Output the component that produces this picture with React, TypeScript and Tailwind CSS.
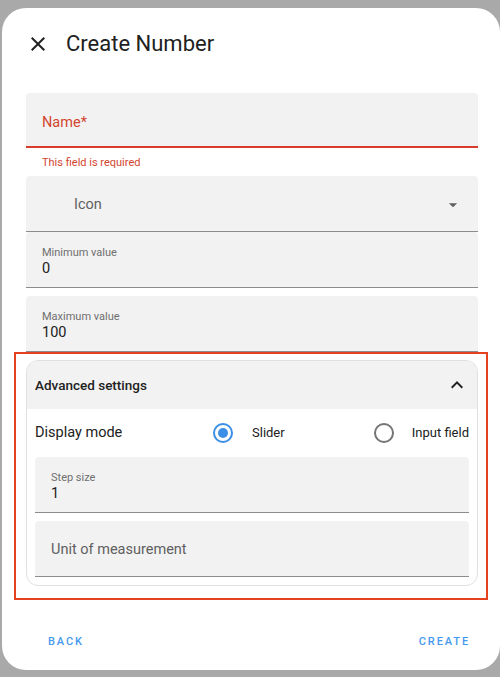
const font = { fontFamily: "Roboto, 'Liberation Sans', sans-serif" };

const CloseIcon = () => (
  <svg width="24" height="24" viewBox="0 0 24 24" fill="#212121">
    <path d="M19 6.41L17.59 5 12 10.59 6.41 5 5 6.41 10.59 12 5 17.59 6.41 19 12 13.41 17.59 19 19 17.59 13.41 12z" />
  </svg>
);

const ArrowDrop = () => (
  <svg width="22" height="22" viewBox="0 0 24 24" fill="#5f5f5f">
    <path d="M7.5 10l4.5 4.5 4.5-4.5z" />
  </svg>
);

const ExpandLess = () => (
  <svg width="24" height="24" viewBox="0 0 24 24" fill="#212121">
    <path d="M12 8l-6 6 1.41 1.41L12 10.83l4.59 4.58L18 14z" />
  </svg>
);

const ValueField = ({ label, value }: { label: string; value: string }) => (
  <div className="h-[56px] rounded-t-[4px] border-b border-[#8c8c8c] bg-[#f2f2f2] pl-4 pt-[13.5px]">
    <div className="text-[11px] leading-[13px] text-[#6f6f6f]">{label}</div>
    <div className="mt-[1px] text-[14.5px] leading-[18px] text-[#212121]">{value}</div>
  </div>
);

const Radio = ({ checked }: { checked?: boolean }) =>
  checked ? (
    <span className="flex h-[20px] w-[20px] items-center justify-center rounded-full border-2 border-[#3b8fe6]">
      <span className="h-[10px] w-[10px] rounded-full bg-[#3b8fe6]" />
    </span>
  ) : (
    <span className="h-[20px] w-[20px] rounded-full border-2 border-[#757575]" />
  );

export default function App() {
  return (
    <div className="h-[677px] w-[500px] overflow-hidden bg-[#a9a9a9] pt-2 pl-[2px]" style={font}>
      <div className="relative flex h-[662px] w-[498px] flex-col rounded-[24px] bg-white">
        <header className="flex h-[72px] items-center gap-4 pl-6">
          <CloseIcon />
          <h1 className="text-[22px] leading-[28px] text-[#212121]">Create Number</h1>
        </header>

        <div className="mt-[13px] flex flex-col pl-6 pr-[22px]">
          <div className="flex h-[55px] items-center rounded-t-[4px] border-b-2 border-[#d93b2b] bg-[#f2f2f2] pl-4 pt-[6px]">
            <span className="text-[14.5px] text-[#d3452f]">Name*</span>
          </div>
          <div className="h-[28px] pl-4 pt-[8px] text-[11px] leading-[13px] text-[#d3452f]">
            This field is required
          </div>

          <div className="flex h-[56px] items-center justify-between rounded-t-[4px] border-b border-[#8c8c8c] bg-[#f2f2f2] pl-12 pr-[14px] pt-[2px]">
            <span className="text-[14.5px] text-[#5f5f5f]">Icon</span>
            <ArrowDrop />
          </div>
          <ValueField label="Minimum value" value="0" />
          <div className="mt-2">
            <ValueField label="Maximum value" value="100" />
          </div>

          <section className="mt-2 h-[226px] overflow-hidden rounded-[12px] border border-[#e0e0e0]">
            <div className="flex h-[48px] items-center justify-between bg-[#f2f2f2] pl-2 pr-[8px]">
              <span className="text-[13.5px] font-medium text-[#212121]">Advanced settings</span>
              <ExpandLess />
            </div>
            <div className="px-2">
              <div className="flex h-[48px] items-center">
                <span className="w-[178px] text-[14.5px] text-[#212121]">Display mode</span>
                <Radio checked />
                <span className="ml-[19px] flex-1 text-[13px] text-[#212121]">Slider</span>
                <Radio />
                <span className="ml-[18px] text-[13px] text-[#212121]">Input field</span>
              </div>
              <ValueField label="Step size" value="1" />
              <div className="mt-2 flex h-[56px] items-center rounded-t-[4px] border-b border-[#8c8c8c] bg-[#f2f2f2] pl-4 pt-[2px]">
                <span className="text-[14.5px] text-[#5f5f5f]">Unit of measurement</span>
              </div>
            </div>
          </section>
        </div>

        <footer className="mt-[38px] flex h-[36px] items-center justify-between pl-[46px] pr-[30px]">
          <button type="button" className="text-[11px] font-medium tracking-[1.9px] text-[#4599ee]">
            BACK
          </button>
          <button type="button" className="text-[11px] font-medium tracking-[1.9px] text-[#4599ee]">
            CREATE
          </button>
        </footer>

        <div className="pointer-events-none absolute left-[12px] top-[344px] h-[248px] w-[474px] border-2 border-[#e5401f]" />
      </div>
    </div>
  );
}
